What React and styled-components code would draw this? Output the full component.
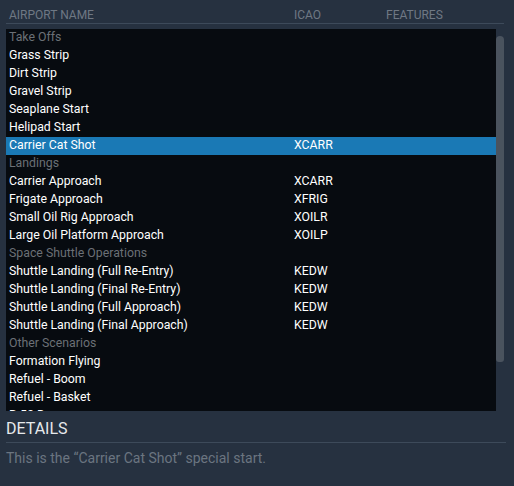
import React from "react";
import styled, { createGlobalStyle } from "styled-components";

const Global = createGlobalStyle`
  html, body { margin: 0; padding: 0; background: #263140; }
  body { font-family: Roboto, "Noto Sans", sans-serif; }
`;

const Page = styled.div`
  width: 514px;
  height: 486px;
  background: #263140;
  box-sizing: border-box;
  padding: 6px 10px 0 6px;
  display: flex;
  flex-direction: column;
  overflow: hidden;
`;

const HeaderRow = styled.div`
  display: grid;
  grid-template-columns: 285px 92px 1fr;
  padding: 2px 3px 0 3px;
  height: 15px;
  border-bottom: 1px solid #3d4a5a;
  font-size: 12px;
  color: #6f7884;
  text-transform: uppercase;
  line-height: 15px;
`;

const ListWrap = styled.div`
  margin-top: 5px;
  display: flex;
  height: 382px;
`;

const List = styled.div`
  width: 490px;
  background: #070b10;
  overflow: hidden;
`;

const Track = styled.div`
  width: 8px;
  padding-top: 7px;
  display: flex;
  flex-direction: column;
`;

const Thumb = styled.div`
  height: 326px;
  background: #4a535e;
  border-radius: 4px 4px 3px 3px;
`;

const Row = styled.div`
  display: grid;
  grid-template-columns: 285px 1fr;
  height: 18px;
  line-height: 17px;
  padding-left: 3px;
  font-size: 12.3px;
  white-space: nowrap;
  color: ${(p) => (p.$group ? "#6b7076" : "#ffffff")};
  background: ${(p) => (p.$selected ? "#1a79b5" : "transparent")};
`;

const Details = styled.div`
  margin-top: 8px;
  font-size: 16px;
  color: #e6e9ec;
  line-height: 20px;
  padding-bottom: 3px;
  border-bottom: 1px solid #3d4a5a;
  margin-right: -2px;
`;

const Desc = styled.div`
  margin-top: 7px;
  font-size: 14px;
  color: #6b7580;
`;

const rows = [
  ["Take Offs", "", true],
  ["Grass Strip", ""],
  ["Dirt Strip", ""],
  ["Gravel Strip", ""],
  ["Seaplane Start", ""],
  ["Helipad Start", ""],
  ["Carrier Cat Shot", "XCARR", false, true],
  ["Landings", "", true],
  ["Carrier Approach", "XCARR"],
  ["Frigate Approach", "XFRIG"],
  ["Small Oil Rig Approach", "XOILR"],
  ["Large Oil Platform Approach", "XOILP"],
  ["Space Shuttle Operations", "", true],
  ["Shuttle Landing (Full Re-Entry)", "KEDW"],
  ["Shuttle Landing (Final Re-Entry)", "KEDW"],
  ["Shuttle Landing (Full Approach)", "KEDW"],
  ["Shuttle Landing (Final Approach)", "KEDW"],
  ["Other Scenarios", "", true],
  ["Formation Flying", ""],
  ["Refuel - Boom", ""],
  ["Refuel - Basket", ""],
  ["B-52 Drop", ""],
];

export default function App() {
  return (
    <>
      <Global />
      <Page>
        <HeaderRow>
          <span>Airport Name</span>
          <span>ICAO</span>
          <span>Features</span>
        </HeaderRow>
        <ListWrap>
          <List>
            {rows.map(([name, icao, group, sel], i) => (
              <Row key={i} $group={group} $selected={sel}>
                <span>{name}</span>
                <span>{icao}</span>
              </Row>
            ))}
          </List>
          <Track>
            <Thumb />
          </Track>
        </ListWrap>
        <Details>DETAILS</Details>
        <Desc>This is the “Carrier Cat Shot” special start.</Desc>
      </Page>
    </>
  );
}
